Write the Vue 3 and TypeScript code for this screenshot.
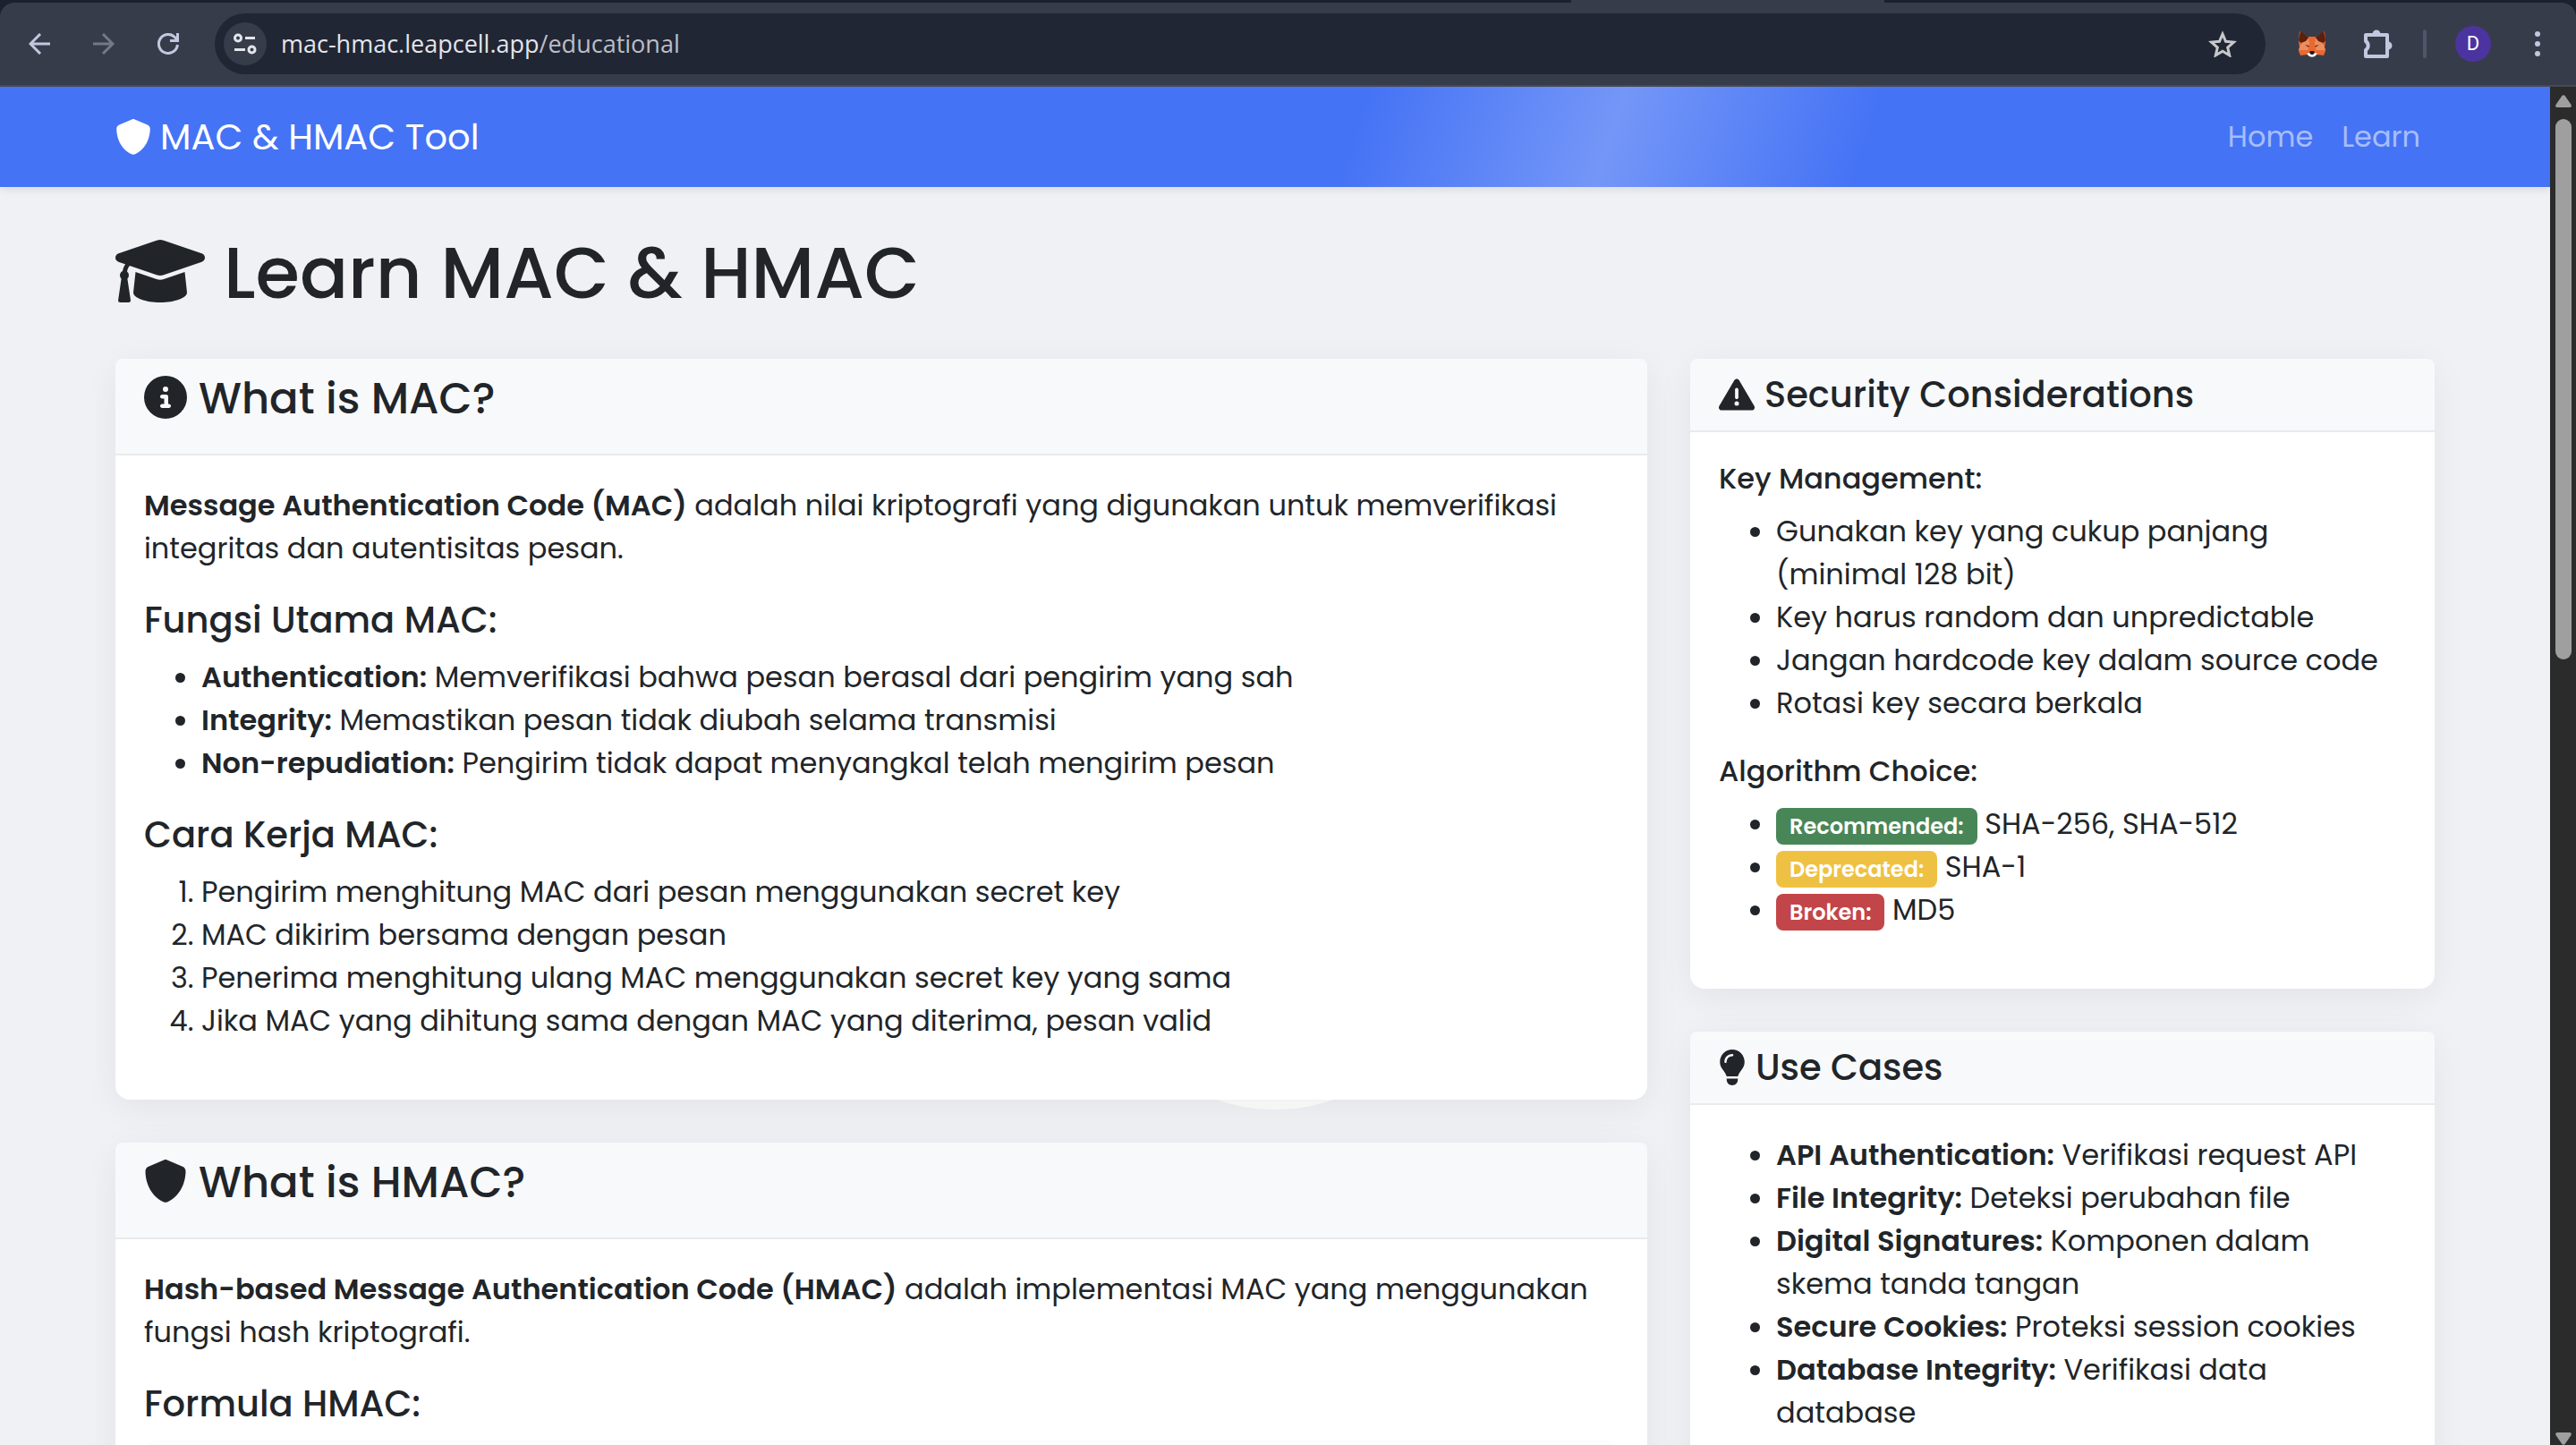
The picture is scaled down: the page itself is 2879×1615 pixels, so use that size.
<script setup lang="ts">
interface Item {
  term?: string
  text: string
}

interface Badge {
  label: string
  tone: 'success' | 'warning' | 'danger'
  text: string
}

const navLinks: string[] = ['Home', 'Learn']

const functions: Item[] = [
  { term: 'Authentication:', text: 'Memverifikasi bahwa pesan berasal dari pengirim yang sah' },
  { term: 'Integrity:', text: 'Memastikan pesan tidak diubah selama transmisi' },
  { term: 'Non-repudiation:', text: 'Pengirim tidak dapat menyangkal telah mengirim pesan' },
]

const steps: string[] = [
  'Pengirim menghitung MAC dari pesan menggunakan secret key',
  'MAC dikirim bersama dengan pesan',
  'Penerima menghitung ulang MAC menggunakan secret key yang sama',
  'Jika MAC yang dihitung sama dengan MAC yang diterima, pesan valid',
]

const keyRules: string[] = [
  'Gunakan key yang cukup panjang (minimal 128 bit)',
  'Key harus random dan unpredictable',
  'Jangan hardcode key dalam source code',
  'Rotasi key secara berkala',
]

const algorithms: Badge[] = [
  { label: 'Recommended:', tone: 'success', text: 'SHA-256, SHA-512' },
  { label: 'Deprecated:', tone: 'warning', text: 'SHA-1' },
  { label: 'Broken:', tone: 'danger', text: 'MD5' },
]

const useCases: Item[] = [
  { term: 'API Authentication:', text: 'Verifikasi request API' },
  { term: 'File Integrity:', text: 'Deteksi perubahan file' },
  { term: 'Digital Signatures:', text: 'Komponen dalam skema tanda tangan' },
  { term: 'Secure Cookies:', text: 'Proteksi session cookies' },
  { term: 'Database Integrity:', text: 'Verifikasi data database' },
]

const shield =
  'M256 0c4.6 0 9.2 1 13.4 2.9L457.7 82.8c22 9.3 38.4 31 38.3 57.2c-.5 99.2-41.3 280.7-213.6 363.2c-16.7 8-36.1 8-52.8 0C57.3 420.7 16.5 239.2 16 140c-.1-26.2 16.3-47.9 38.3-57.2L242.7 2.9C246.8 1 251.4 0 256 0z'
</script>

<template>
  <div class="window">
    <header class="chrome">
      <div class="tab-strip"><span class="active-tab"></span></div>
      <div class="toolbar">
        <button class="tool" aria-label="Back">
          <svg viewBox="0 0 24 24" width="24" height="24" fill="none" stroke="#c3c7df" stroke-width="3">
            <path d="M24 12H2M13 1L2 12l11 11" />
          </svg>
        </button>
        <button class="tool" aria-label="Forward">
          <svg viewBox="0 0 24 24" width="24" height="24" fill="none" stroke="#747985" stroke-width="3">
            <path d="M0 12h22M11 1l11 11-11 11" />
          </svg>
        </button>
        <button class="tool" aria-label="Reload">
          <svg viewBox="0 0 24 24" width="24" height="24" fill="none" stroke="#c3c7df" stroke-width="3">
            <path d="M22.4 13A10.5 10.5 0 1 1 19.5 4.7L23 8.500" />
            <path d="M22.5 0v8.500H14" />
          </svg>
        </button>
        <div class="omnibox">
          <button class="site-info" aria-label="Site information">
            <svg viewBox="0 0 26 24" width="26" height="24" fill="none" stroke="#e3e5ea" stroke-width="3">
              <circle cx="5" cy="5.500" r="3.500" />
              <path d="M13 5.500h11M1 18.500h12" />
              <circle cx="20.500" cy="18.500" r="3.500" />
            </svg>
          </button>
          <span class="url">mac-hmac.leapcell.app<span class="path">/educational</span></span>
          <button class="star" aria-label="Bookmark this page">
            <svg viewBox="0 0 32 30" width="32" height="30" fill="none" stroke="#c7c8ca" stroke-width="3">
              <path d="M16 4l3.500 8.300 9 .8-6.800 6 2 8.700L16 23.200l-7.700 4.600 2-8.700-6.800-6 9-.8z" />
            </svg>
          </button>
        </div>
        <button class="ext" aria-label="Wallet extension">
          <svg viewBox="0 0 30 30" width="30" height="30">
            <path fill="#e9692f" d="M1 1l10 7h8l10-7 1 12-1 6 1 4-2 5-8-1-2 2h-6l-2-2-8 1-2-5 1-4-1-6z" />
            <path fill="#eb8f63" d="M11 8l2 9-3 5H0l2-6 4-3zM19 8l-2 9 3 5h10l-2-6-4-3z" />
            <path fill="#e9692f" d="M11 7h8l-1 8 1 8h-8l1-8z" />
            <path fill="#5c1f0a" d="M2 1l9 7-3 4-6 2-2-3zM28 1l-9 7 3 4 6 2 2-3z" />
            <path fill="#7c3418" d="M7 16l5 1-1 2zM23 16l-5 1 1 2z" />
            <path fill="#f7f5f3" d="M9 26l3-1h6l3 1-3 3q-3 1.500-6 0z" />
            <path fill="#1b1b24" d="M13 23h4l1 2-2 2h-2l-2-2z" />
          </svg>
        </button>
        <button class="ext" aria-label="Extensions">
          <svg viewBox="0 0 32 32" width="32" height="32">
            <path
              fill="none"
              stroke="#c3c7df"
              stroke-width="4"
              stroke-linejoin="round"
              d="M2 6h24v24H2v-7a6 6 0 0 0 0-10z"
            />
            <path fill="#c3c7df" d="M9.500 5a4.500 4.500 0 0 1 9 0zM27 13.500a4.500 4.500 0 0 1 0 9z" />
          </svg>
        </button>
        <span class="divider"></span>
        <button class="avatar" aria-label="Profile">D</button>
        <button class="menu" aria-label="Menu">
          <svg viewBox="0 0 6 28" width="6" height="28" fill="#c3c7df">
            <circle cx="3" cy="3" r="3" />
            <circle cx="3" cy="14" r="3" />
            <circle cx="3" cy="25" r="3" />
          </svg>
        </button>
      </div>
    </header>

    <div class="viewport">
      <div class="page">
        <nav class="navbar">
          <div class="container nav-inner">
            <a class="brand" href="#">
              <svg viewBox="0 0 512 512" width="40" height="40" fill="currentColor"><path :d="shield" /></svg>
              MAC &amp; HMAC Tool
            </a>
            <div class="links">
              <a v-for="link in navLinks" :key="link" href="#">{{ link }}</a>
            </div>
          </div>
        </nav>

        <main class="container main">
          <span class="ripple"></span>
          <h1>
            <svg viewBox="0 0 100 70" width="100" height="70" fill="currentColor">
              <path
                d="M46 .8q4-1.600 8 0L96.500 15.300q3.500 1.500 3.500 4.700t-3.500 4.700L54 39.200q-4 1.600-8 0L3.500 24.700Q0 23.200 0 20t3.500-4.700z"
              />
              <path d="M22.500 36l23.500 7.900q4 1.600 8 0L77.500 36 80 59c0 6-14 11-30 11s-30-5-30-11z" />
              <path d="M13 25l5 2q-4 3-5 8.400 2 1.600 2 4.200 0 2.400-1.600 4L17 67.500q0 2.500-2.500 2.500h-9Q3 70 3.100 67.500L6.600 43.600Q5 42 5 39.600q0-3.200 3-4.700Q9 29 13 25z" />
            </svg>
            Learn MAC &amp; HMAC
          </h1>

          <div class="row">
            <div class="col">
              <section class="card">
                <header class="card-header large">
                  <h3>
                    <svg viewBox="0 0 512 512" width="48" height="48" fill="currentColor">
                      <path
                        d="M256 512A256 256 0 1 0 256 0a256 256 0 1 0 0 512zM216 336h24V272H216c-13.3 0-24-10.7-24-24s10.7-24 24-24h48c13.3 0 24 10.7 24 24v88h8c13.3 0 24 10.7 24 24s-10.7 24-24 24H216c-13.3 0-24-10.7-24-24s10.7-24 24-24zm40-208a32 32 0 1 1 0 64 32 32 0 1 1 0-64z"
                      />
                    </svg>
                    What is MAC?
                  </h3>
                </header>
                <div class="card-body">
                  <p>
                    <strong>Message Authentication Code (MAC)</strong> adalah nilai kriptografi yang digunakan untuk
                    memverifikasi integritas dan autentisitas pesan.
                  </p>
                  <h5>Fungsi Utama MAC:</h5>
                  <ul>
                    <li v-for="item in functions" :key="item.text">
                      <strong>{{ item.term }}</strong> {{ item.text }}
                    </li>
                  </ul>
                  <h5>Cara Kerja MAC:</h5>
                  <ol>
                    <li v-for="step in steps" :key="step">{{ step }}</li>
                  </ol>
                </div>
              </section>

              <section class="card">
                <header class="card-header large">
                  <h3>
                    <svg viewBox="0 0 512 512" width="48" height="48" fill="currentColor"><path :d="shield" /></svg>
                    What is HMAC?
                  </h3>
                </header>
                <div class="card-body">
                  <p>
                    <strong>Hash-based Message Authentication Code (HMAC)</strong> adalah implementasi MAC yang
                    menggunakan fungsi hash kriptografi.
                  </p>
                  <h5>Formula HMAC:</h5>
                  <div class="formula"></div>
                </div>
              </section>
            </div>

            <div class="col side">
              <section class="card">
                <header class="card-header">
                  <h5>
                    <svg viewBox="0 0 512 512" width="40" height="40" fill="currentColor">
                      <path
                        d="M256 32c14.2 0 27.3 7.5 34.5 19.8l216 368c7.3 12.4 7.3 27.7 .2 40.1S486.3 480 472 480H40c-14.3 0-27.6-7.7-34.7-20.1s-7-27.8 .2-40.1l216-368C228.7 39.5 241.8 32 256 32zm0 128c-13.3 0-24 10.7-24 24V296c0 13.3 10.7 24 24 24s24-10.7 24-24V184c0-13.3-10.7-24-24-24zm32 224a32 32 0 1 0 -64 0 32 32 0 1 0 64 0z"
                      />
                    </svg>
                    Security Considerations
                  </h5>
                </header>
                <div class="card-body">
                  <h6>Key Management:</h6>
                  <ul>
                    <li v-for="rule in keyRules" :key="rule">{{ rule }}</li>
                  </ul>
                  <h6>Algorithm Choice:</h6>
                  <ul>
                    <li v-for="algo in algorithms" :key="algo.label">
                      <span class="badge" :class="algo.tone">{{ algo.label }}</span> {{ algo.text }}
                    </li>
                  </ul>
                </div>
              </section>

              <section class="card">
                <header class="card-header">
                  <h5>
                    <svg viewBox="0 0 384 512" width="30" height="40" fill="currentColor">
                      <path
                        d="M272 384c9.6-31.9 29.5-59.1 49.2-86.2l0 0c5.2-7.1 10.4-14.2 15.4-21.4c19.8-28.5 31.4-63 31.4-100.3C368 78.8 289.2 0 192 0S16 78.8 16 176c0 37.3 11.6 71.9 31.4 100.3c5 7.2 10.2 14.3 15.4 21.4l0 0c19.8 27.1 39.7 54.4 49.2 86.2H272zM192 512c44.2 0 80-35.8 80-80V416H112v16c0 44.2 35.8 80 80 80zM112 176c0 8.8-7.2 16-16 16s-16-7.2-16-16c0-61.9 50.1-112 112-112c8.8 0 16 7.2 16 16s-7.2 16-16 16c-44.2 0-80 35.8-80 80z"
                      />
                    </svg>
                    Use Cases
                  </h5>
                </header>
                <div class="card-body">
                  <ul>
                    <li v-for="item in useCases" :key="item.text">
                      <strong>{{ item.term }}</strong> {{ item.text }}
                    </li>
                  </ul>
                </div>
              </section>
            </div>
          </div>
        </main>
      </div>

      <div class="scrollbar">
        <svg viewBox="0 0 18 14" width="18" height="14" fill="#9f9f9f">
          <path d="M7 1.500q2-2.500 4 0L17.500 11q1 3-1.500 3H2q-2.500 0-1.500-3z" />
        </svg>
        <span class="thumb"></span>
        <svg class="down" viewBox="0 0 18 14" width="18" height="14" fill="#9f9f9f">
          <path d="M7 12.500q2 2.500 4 0L17.500 3q1-3-1.500-3H2Q-.5 0 .5 3z" />
        </svg>
      </div>
    </div>
  </div>
</template>

<style>
body {
  margin: 0;
}
</style>

<style scoped>
.window {
  display: flex;
  flex-direction: column;
  height: 100vh;
  overflow: hidden;
  background: #f0f1f5;
  color: #212529;
  font: 400 32px/48px Poppins, Inter, 'Liberation Sans', sans-serif;
}

.window *,
.window *::before {
  box-sizing: border-box;
}

button {
  display: flex;
  align-items: center;
  justify-content: center;
  padding: 0;
  border: 0;
  background: none;
}

svg {
  display: block;
  flex: none;
}

a {
  color: inherit;
  text-decoration: none;
}

/* Browser chrome */
.chrome {
  flex: none;
  background: #1c2130;
  border-bottom: 2px solid #474a52;
}

.tab-strip {
  display: flex;
  height: 3px;
  padding-left: 61%;
}

.active-tab {
  width: 350px;
  background: #373c4b;
}

.toolbar {
  display: flex;
  align-items: center;
  height: 92px;
  padding: 0 36px 0 20px;
  border-radius: 16px 16px 0 0;
  background: #373c4b;
}

.tool {
  width: 48px;
  height: 48px;
  margin-right: 24px;
}

.omnibox {
  display: flex;
  flex: 1;
  align-items: center;
  height: 68px;
  margin-left: 4px;
  padding: 0 32px 0 10px;
  border-radius: 34px;
  background: #212635;
}

.site-info {
  width: 48px;
  height: 48px;
  margin-right: 16px;
  border-radius: 50%;
  background: #373c4b;
}

.url {
  flex: 1;
  color: #e3e5ea;
  font: 400 27px/40px 'Segoe UI', 'Open Sans', 'Noto Sans', sans-serif;
}

.path {
  color: #bcbec5;
}

.ext {
  width: 32px;
  margin-left: 36px;
}

.ext + .ext {
  margin-left: 42px;
}

.divider {
  width: 4px;
  height: 32px;
  margin: 0 32px 0 34px;
  border-radius: 2px;
  background: #50566a;
}

.avatar {
  width: 40px;
  height: 40px;
  border-radius: 50%;
  background: #4c34a0;
  color: #fff;
  font: 400 22px/40px Roboto, sans-serif;
}

.menu {
  width: 14px;
  margin-left: 45px;
}

/* Page */
.viewport {
  display: flex;
  flex: 1;
  min-height: 0;
}

.page {
  flex: 1;
  min-width: 0;
  overflow: hidden;
}

.container {
  width: 100%;
  max-width: 2640px;
  margin: 0 auto;
  padding: 0 24px;
}

.navbar {
  padding: 16px 0;
  background: linear-gradient(
      108deg,
      transparent 53%,
      rgba(255, 255, 255, 0.25) 63%,
      transparent 73%
    ),
    #4573f5;
  box-shadow: 0 4px 8px rgba(0, 0, 0, 0.08);
}

.nav-inner {
  display: flex;
  align-items: center;
  justify-content: space-between;
  height: 80px;
}

.brand {
  display: flex;
  align-items: center;
  gap: 10px;
  color: #fff;
  font-size: 40px;
  line-height: 60px;
}

.links {
  display: flex;
  color: rgba(255, 255, 255, 0.55);
}

.links a {
  padding: 16px;
}

.main {
  position: relative;
  padding-top: 48px;
}

.ripple {
  position: absolute;
  top: 631px;
  left: 50%;
  width: 400px;
  height: 400px;
  margin-left: -200px;
  border-radius: 50%;
  background: #fdfdfc;
}

h1,
h3,
h5,
h6 {
  margin: 0;
  font-weight: 500;
}

h1 {
  display: flex;
  align-items: center;
  gap: 21px;
  margin-bottom: 48px;
  font-size: 80px;
  line-height: 96px;
}

h3 {
  display: flex;
  align-items: center;
  gap: 13px;
  font-size: 48px;
  line-height: 58px;
}

h1 svg,
h3 svg {
  margin-bottom: 4px;
}

h5 {
  margin-bottom: 16px;
  font-size: 40px;
  line-height: 48px;
}

h6 {
  margin-bottom: 16px;
  font-size: 32px;
  line-height: 39px;
}

.row {
  position: relative;
  display: flex;
  gap: 48px;
}

.col {
  flex: 1712;
  min-width: 0;
}

.side {
  flex: 832;
}

.card {
  margin-bottom: 48px;
  border-radius: 16px;
  background: #fff;
  box-shadow: 0 8px 40px rgba(0, 0, 0, 0.06);
}

.card-header {
  padding: 16px 32px;
  border-bottom: 2px solid #e9eaee;
  border-radius: 8px 8px 0 0;
  background: #f8f9fb;
}

.card-header h5 {
  display: flex;
  align-items: center;
  gap: 11px;
  margin: 0;
}

.card-header.large {
  padding-bottom: 32px;
}

.card-body {
  padding: 32px;
}

p {
  margin: 0 0 32px;
}

strong {
  font-weight: 600;
}

ul,
ol {
  margin: 0 0 32px;
  padding-left: 64px;
}

.badge {
  display: inline-block;
  padding: 8px 15px;
  border-radius: 8px;
  color: #fff;
  font-size: 24px;
  font-weight: 600;
  line-height: 25px;
}

.success {
  background: #498657;
}

.warning {
  background: #efc143;
}

.danger {
  background: #c24649;
}

.formula {
  height: 96px;
  border-radius: 16px;
  background: #fdfdfd;
}

/* Scrollbar */
.scrollbar {
  display: flex;
  flex: none;
  flex-direction: column;
  align-items: center;
  width: 29px;
  padding-top: 9px;
  background: #2b2b2b;
}

.thumb {
  flex: none;
  width: 18px;
  height: 40%;
  margin-top: 13px;
  border-radius: 9px;
  background: #9f9f9f;
}

.down {
  margin-top: auto;
}
</style>
